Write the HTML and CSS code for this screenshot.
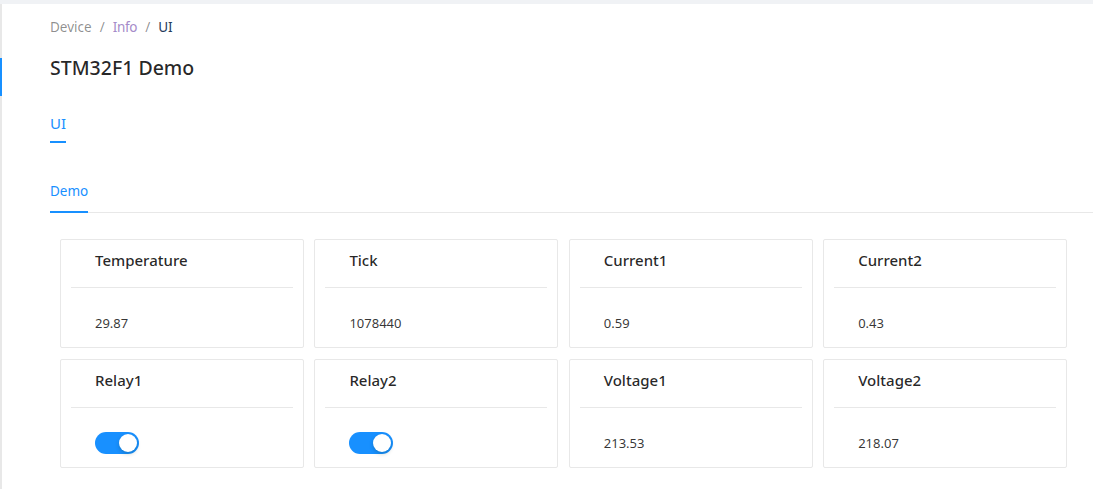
FILE: index.html
```html
<!DOCTYPE html>
<html>
<head>
<meta charset="utf-8">
<link rel="stylesheet" href="styles.css">
</head>
<body>
<div class="page">
  <div class="panel">
    <span class="side-indicator"></span>
    <div class="header">
      <nav class="breadcrumb">
        <span class="crumb crumb-device">Device</span>
        <span class="sep">/</span>
        <span class="crumb crumb-info">Info</span>
        <span class="sep">/</span>
        <span class="crumb crumb-current">UI</span>
      </nav>
      <h1 class="title">STM32F1 Demo</h1>
      <div class="page-tabs">
        <span class="page-tab active">UI</span>
      </div>
    </div>
    <div class="tabs">
      <span class="tab active">Demo</span>
    </div>
    <div class="grid">
      <div class="card"><div class="card-head"><span>Temperature</span></div><div class="card-body">29.87</div></div>
      <div class="card"><div class="card-head"><span>Tick</span></div><div class="card-body">1078440</div></div>
      <div class="card"><div class="card-head"><span>Current1</span></div><div class="card-body">0.59</div></div>
      <div class="card"><div class="card-head"><span>Current2</span></div><div class="card-body">0.43</div></div>
      <div class="card"><div class="card-head"><span>Relay1</span></div><div class="card-body"><span class="switch on"><span class="knob"></span></span></div></div>
      <div class="card"><div class="card-head"><span>Relay2</span></div><div class="card-body"><span class="switch on"><span class="knob"></span></span></div></div>
      <div class="card"><div class="card-head"><span>Voltage1</span></div><div class="card-body">213.53</div></div>
      <div class="card"><div class="card-head"><span>Voltage2</span></div><div class="card-body">218.07</div></div>
    </div>
  </div>
</div>
</body>
</html>
```
FILE: styles.css
```css
* { box-sizing: border-box; }
html, body { margin: 0; padding: 0; }
body {
  font-family: "Noto Sans", "Open Sans", sans-serif;
  background: #f0f2f5;
  color: rgba(0,0,0,0.85);
}
.page {
  padding-top: 4px;
  height: 489px;
  overflow: hidden;
}
.panel {
  position: relative;
  background: #fff;
  height: 485px;
  border-left: 2px solid #e8e8e8;
}
.side-indicator {
  position: absolute;
  left: -2px;
  top: 54px;
  width: 2px;
  height: 38px;
  background: #1890ff;
}
.header {
  padding-left: 48px;
  padding-top: 12px;
}
.breadcrumb {
  display: flex;
  gap: 8px;
  font-size: 13.5px;
  line-height: 22px;
  height: 22px;
}
.crumb-device, .sep { color: rgba(0,0,0,0.45); }
.crumb-info { color: #a58bc9; letter-spacing: -0.3px; }
.crumb-current { color: #25395a; }
.title {
  margin: 16px 0 0;
  font-size: 19.5px;
  font-weight: 500;
  line-height: 28px;
  color: rgba(0,0,0,0.85);
}
.page-tabs {
  margin-top: 29px;
  display: flex;
}
.page-tab {
  position: relative;
  font-size: 15px;
  line-height: 24px;
  padding-bottom: 8px;
  color: #1890ff;
}
.page-tab::after {
  content: "";
  position: absolute;
  left: 0;
  right: 0;
  bottom: 0;
  height: 2px;
  background: #1890ff;
}
.tabs {
  margin-top: 25px;
  margin-left: 48px;
  display: flex;
  border-bottom: 1px solid #e8e8e8;
}
.tab {
  position: relative;
  font-size: 13.5px;
  line-height: 22px;
  padding: 12px 0 10px;
  color: #1890ff;
}
.tab::after {
  content: "";
  position: absolute;
  left: 0;
  right: 0;
  bottom: -1px;
  height: 2px;
  background: #1890ff;
}
.grid {
  display: grid;
  grid-template-columns: repeat(4, 244px);
  column-gap: 10.4px;
  row-gap: 11px;
  margin: 26px 0 0 58px;
}
.card {
  border: 1px solid #e8e8e8;
  border-radius: 2px;
  height: 109px;
  display: flex;
  flex-direction: column;
}
.card-head {
  margin: 0 10px;
  height: 48px;
  padding: 9px 0 0 24px;
  border-bottom: 1px solid #e8e8e8;
  font-size: 15px;
  font-weight: 500;
  line-height: 22px;
  color: rgba(0,0,0,0.85);
}
.card-body {
  padding: 24px 0 0 34px;
  font-size: 13px;
  line-height: 22px;
  color: rgba(0,0,0,0.8);
}
.switch {
  display: inline-block;
  position: relative;
  width: 44px;
  height: 22px;
  border-radius: 11px;
  background: #1890ff;
  vertical-align: top;
}
.knob {
  position: absolute;
  top: 2px;
  right: 2px;
  width: 18px;
  height: 18px;
  border-radius: 50%;
  background: #fff;
  box-shadow: 0 2px 4px rgba(0,35,11,0.2);
}
```
